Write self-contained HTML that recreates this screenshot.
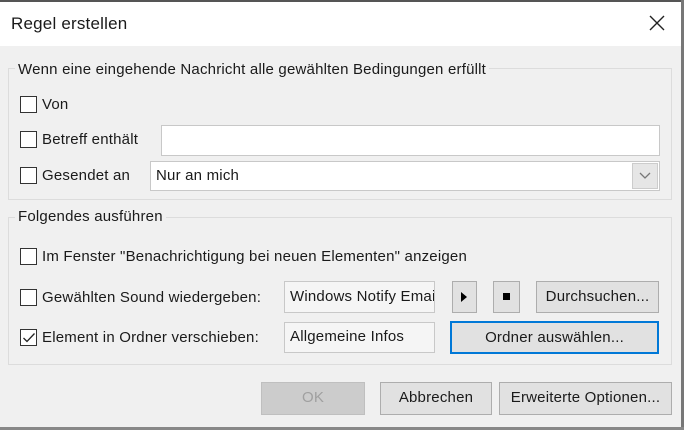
<!DOCTYPE html>
<html><head><meta charset="utf-8"><style>
*{box-sizing:border-box;margin:0;padding:0}
body{width:684px;height:430px;background:#f0f0f0;font-family:"Liberation Sans",sans-serif;font-size:15px;letter-spacing:0.2px;color:#1a1a1a;position:relative;overflow:hidden}
.a{position:absolute}
.grp{position:absolute;border:1px solid #dcdcdc;}
.lg{position:absolute;background:#f0f0f0;padding:0 3px;white-space:nowrap}
.cb{position:absolute;width:17px;height:17px;border:1px solid #333;background:#fff}
.t{position:absolute;white-space:nowrap;line-height:17px}
.in{position:absolute;background:#fff;border:1px solid #c8c8c8;padding-left:5px;line-height:28px;white-space:nowrap;overflow:hidden}
.ro{background:#f5f5f5}
.btn{position:absolute;background:#e1e1e1;border:1px solid #adadad;text-align:center;line-height:30px;white-space:nowrap}
</style></head><body>
<div class="a" style="left:0;top:0;width:684px;height:2px;background:#555"></div>
<div class="a" style="left:681px;top:0;width:3px;height:430px;background:#777"></div>
<div class="a" style="left:0;top:427px;width:684px;height:3px;background:#888"></div>
<div class="a" style="left:0;top:2px;width:681px;height:44px;background:#fff"></div>
<div class="t" style="left:11px;top:15px;font-size:17px">Regel erstellen</div>
<svg class="a" style="left:649px;top:15px" width="16" height="16"><path d="M1 1L15 15M15 1L1 15" stroke="#222" stroke-width="1.4"/></svg>

<div class="grp" style="left:8px;top:68px;width:664px;height:132px"></div>
<div class="lg" style="left:15px;top:61px">Wenn eine eingehende Nachricht alle gewählten Bedingungen erfüllt</div>
<div class="cb" style="left:20px;top:96px"></div><div class="t" style="left:42px;top:96px">Von</div>
<div class="cb" style="left:20px;top:131px"></div><div class="t" style="left:42px;top:131px">Betreff enthält</div>
<div class="in" style="left:161px;top:125px;width:499px;height:31px"></div>
<div class="cb" style="left:20px;top:167px"></div><div class="t" style="left:42px;top:167px">Gesendet an</div>
<div class="in" style="left:150px;top:161px;width:510px;height:30px">Nur an mich</div>
<div class="a" style="left:632px;top:163px;width:26px;height:26px;background:#e6e6e6;border:1px solid #ccc"></div>
<svg class="a" style="left:639px;top:172px" width="12" height="8"><path d="M1 1L6 6L11 1" stroke="#777" fill="none" stroke-width="1.3"/></svg>

<div class="grp" style="left:8px;top:217px;width:664px;height:148px"></div>
<div class="lg" style="left:15px;top:208px">Folgendes ausführen</div>
<div class="cb" style="left:20px;top:248px"></div><div class="t" style="left:42px;top:248px">Im Fenster "Benachrichtigung bei neuen Elementen" anzeigen</div>
<div class="cb" style="left:20px;top:289px"></div><div class="t" style="left:42px;top:289px">Gewählten Sound wiedergeben:</div>
<div class="in ro" style="left:284px;top:281px;width:151px;height:32px;line-height:30px">Windows Notify Email</div>
<div class="btn" style="left:452px;top:281px;width:25px;height:32px"></div>
<svg class="a" style="left:461px;top:292px" width="6" height="10"><path d="M0 0L6 5L0 10Z" fill="#000"/></svg>
<div class="btn" style="left:493px;top:281px;width:27px;height:32px"></div>
<div class="a" style="left:503px;top:293px;width:7px;height:7px;background:#000"></div>
<div class="btn" style="left:536px;top:281px;width:123px;height:32px">Durchsuchen...</div>
<div class="cb" style="left:20px;top:329px"></div>
<svg class="a" style="left:22px;top:332px" width="14" height="12"><path d="M1.5 6L5 9.5L12.5 1.5" stroke="#222" fill="none" stroke-width="1.3"/></svg>
<div class="t" style="left:42px;top:329px">Element in Ordner verschieben:</div>
<div class="in ro" style="left:284px;top:322px;width:151px;height:31px">Allgemeine Infos</div>
<div class="btn" style="left:450px;top:321px;width:209px;height:33px;border:2px solid #0078d7">Ordner auswählen...</div>

<div class="btn" style="left:261px;top:382px;width:104px;height:33px;color:#a0a0a0;background:#ccc;border-color:#bfbfbf">OK</div>
<div class="btn" style="left:380px;top:382px;width:112px;height:33px">Abbrechen</div>
<div class="btn" style="left:499px;top:382px;width:173px;height:33px">Erweiterte Optionen...</div>
</body></html>
